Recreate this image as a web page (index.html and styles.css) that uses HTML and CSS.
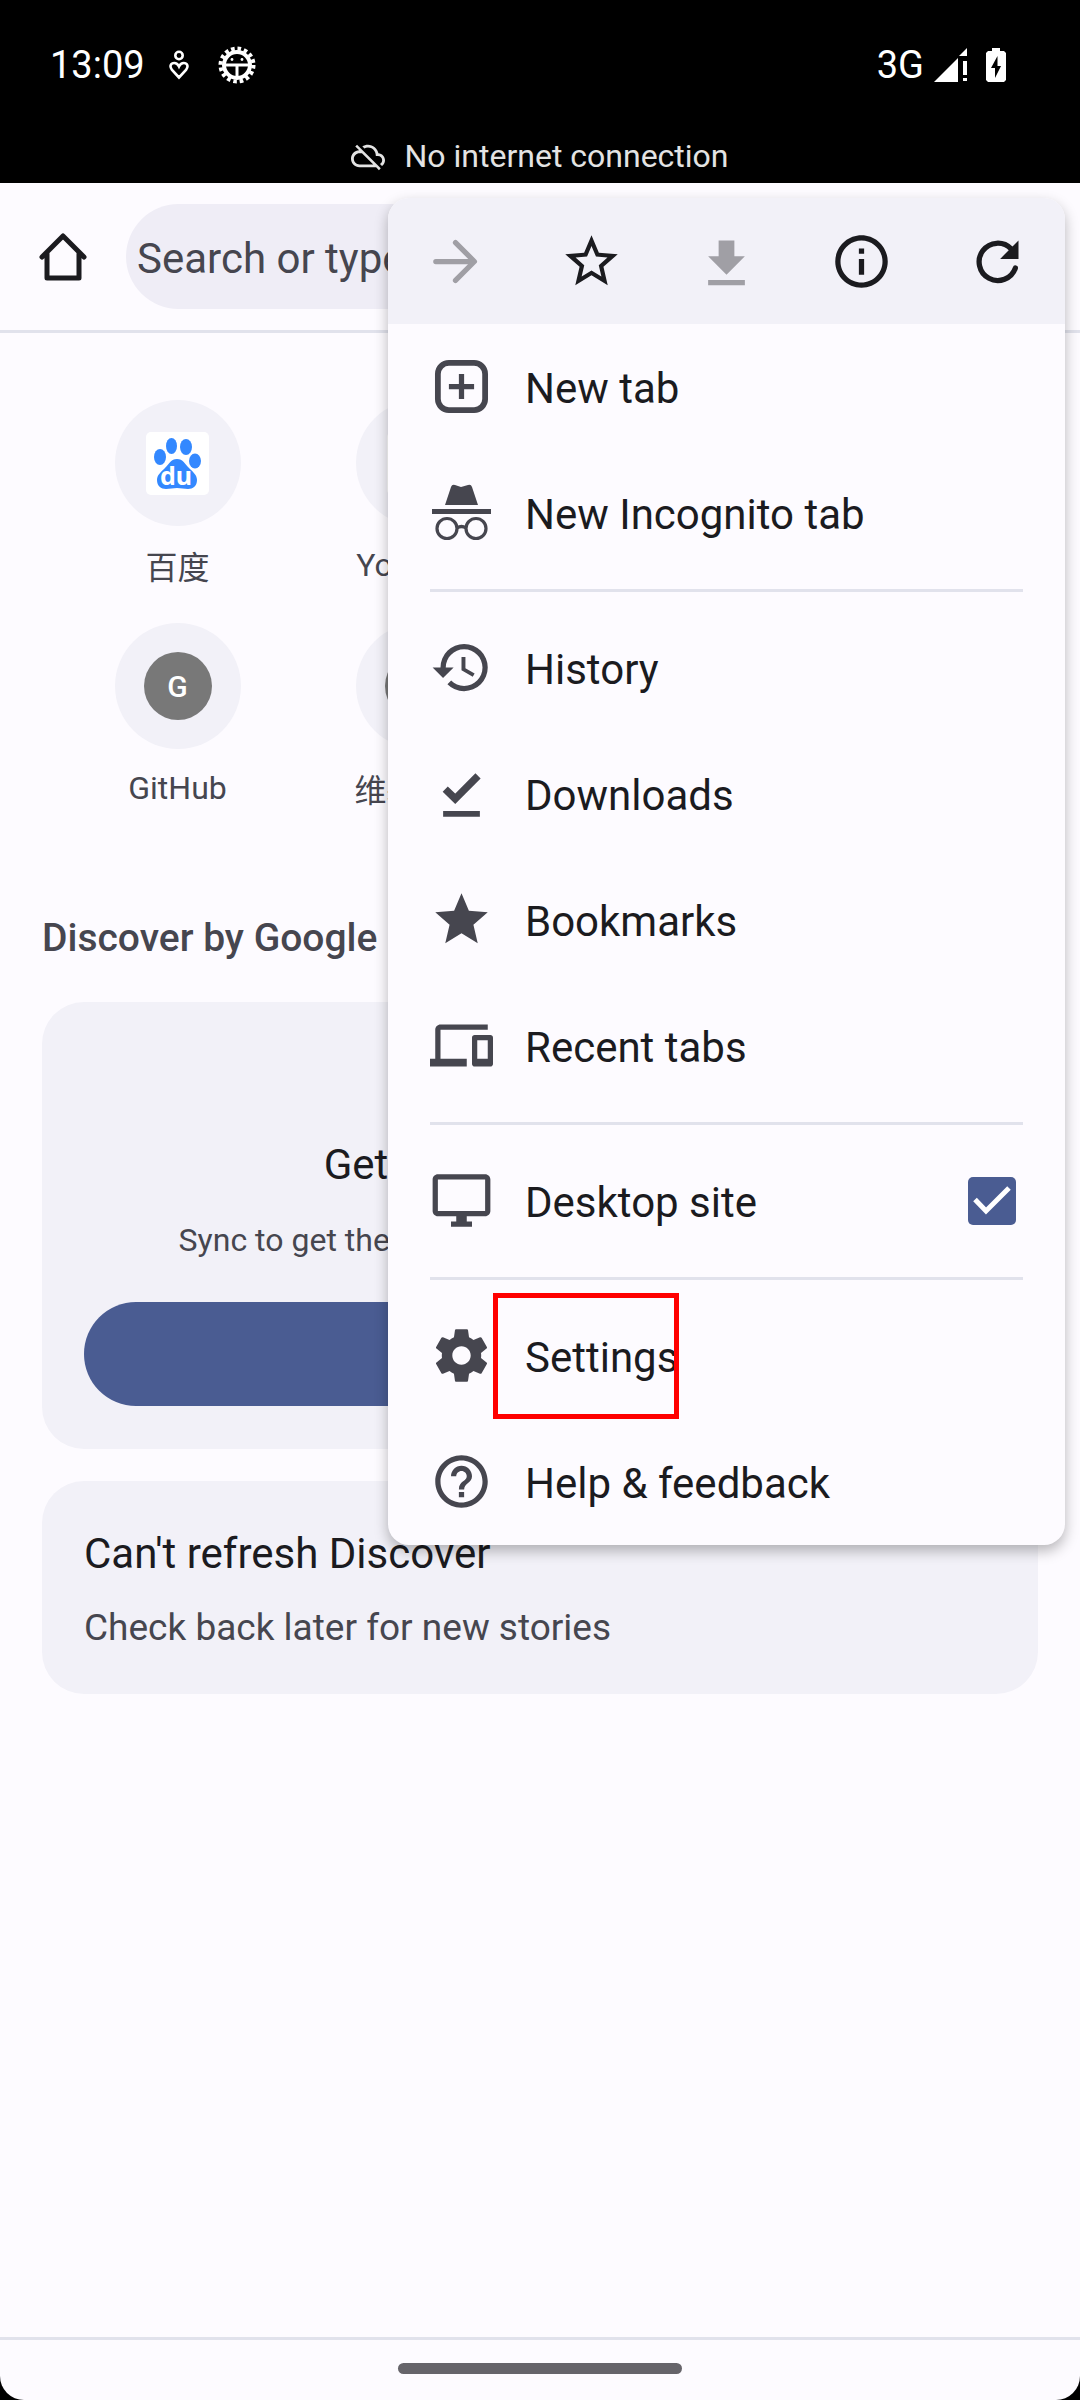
FILE: index.html
```html
<!DOCTYPE html>
<html lang="en">
<head>
<meta charset="utf-8">
<meta name="viewport" content="width=device-width, initial-scale=1">
<title>New tab</title>
<link rel="stylesheet" href="styles.css">
</head>
<body>
<div class="status">
  <div class="status-row">
    <span class="clock">13:09</span>
    <svg class="st-care" viewBox="0 0 20 30" fill="none" stroke="#fff" stroke-width="2.600"><circle cx="10" cy="5.500" r="3.700"/><path d="M10 27.500 3 20C0 16 2 13 5.300 13 7.500 13 9 14.500 10 16.500 11 14.500 12.500 13 14.700 13 18 13 20 16 17 20z"/></svg>
    <svg class="st-bug" viewBox="0 0 38 38"><circle cx="19" cy="19" r="13" fill="none" stroke="#fff" stroke-width="4"/><circle cx="19" cy="19" r="16.500" fill="none" stroke="#fff" stroke-width="4" stroke-dasharray="3.600 2.880"/><path d="M6 17.500h26v3H20.500V33h-3V20.500H6z" fill="#fff"/><circle cx="14" cy="13.500" r="1.400" fill="#fff"/><circle cx="24" cy="13.500" r="1.400" fill="#fff"/></svg>
    <span class="network">3G</span>
    <svg class="st-signal" viewBox="0 0 34 34" fill="#fff"><path d="M0 34 24 10v24zM25 8l8-8v8zM29 13h4v14h-4zM29 30h4v3h-4z"/></svg>
    <svg class="st-battery" viewBox="0 0 20 34"><path fill="#fff" d="M6 0h8v3h4l2 2v27l-2 2H2l-2-2V5l2-2h4z"/><path d="M11.500 8 5 20h4v10l6-12h-3.500z"/></svg>
  </div>
  <div class="offline">
    <svg viewBox="0 0 24 24" fill="#e3e3e3"><path d="M19.350 10.040C18.670 6.590 15.640 4 12 4c-1.480 0-2.850.43-4.010 1.170l1.460 1.460C10.210 6.230 11.080 6 12 6c3.040 0 5.500 2.460 5.500 5.500v.5H19c1.660 0 3 1.340 3 3 0 1.130-.64 2.110-1.560 2.620l1.450 1.450C23.160 18.160 24 16.680 24 15c0-2.640-2.050-4.780-4.650-4.960zM3 5.270l2.750 2.740C2.560 8.150 0 10.770 0 14c0 3.310 2.690 6 6 6h11.730l2 2L21 20.730 4.270 4 3 5.270zM7.730 10l8 8H6c-2.210 0-4-1.790-4-4s1.790-4 4-4h1.730z"/></svg>
    <span>No internet connection</span>
  </div>
</div>

<div class="browser">
  <header class="toolbar">
    <button class="home" aria-label="Home"><svg viewBox="0 0 48 48" fill="none" stroke="#1b1b1f" stroke-width="5" stroke-linecap="round" stroke-linejoin="round"><path d="M3 24 24 3l21 21M8 20v25h32V20"/></svg></button>
    <input class="search" type="text" aria-label="Search" placeholder="Search or type URL">
  </header>

  <main class="content">
    <nav class="tiles">
      <a class="tile" href="#"><span class="disc"><svg class="baidu" viewBox="0 0 63 63"><rect width="63" height="63" rx="5" fill="#fff"/><g fill="#3388ff"><ellipse cx="14" cy="25" rx="6" ry="8"/><ellipse cx="25.500" cy="14" rx="5.500" ry="8"/><ellipse cx="40" cy="15" rx="6" ry="8"/><ellipse cx="49" cy="29" rx="6" ry="7.500"/><path d="M31 27c6 0 8 5 12 9s8 7 8 12c0 6-4 9-9 9-4 0-7-1-11-1s-7 1-11 1c-5 0-9-3-9-9 0-5 4-8 8-12s6-9 12-9z"/></g><text x="30" y="53" text-anchor="middle" class="du">du</text></svg></span><span class="name zh" lang="zh">百度</span></a>
      <a class="tile" href="#"><span class="disc"><span class="favicon"></span></span><span class="name">YouTube</span></a>
      <span></span><span></span>
      <a class="tile" href="#"><span class="disc"><span class="mono">G</span></span><span class="name">GitHub</span></a>
      <a class="tile" href="#"><span class="disc"><span class="mono"></span></span><span class="name zh" lang="zh">维基百科</span></a>
    </nav>

    <h2 class="heading">Discover by Google</h2>

    <section class="card promo">
      <h3>Get articles just for you</h3>
      <p>Sync to get the most relevant content from Google.</p>
      <button class="cta">Continue</button>
    </section>

    <section class="card notice">
      <h3>Can't refresh Discover</h3>
      <p>Check back later for new stories</p>
    </section>
  </main>

  <footer class="gesture"><span class="handle"></span></footer>

  <div class="menu">
    <div class="menu-bar">
      <button aria-label="Forward" disabled><svg viewBox="0 0 24 24" fill="none" stroke="#a09fa5" stroke-width="2" stroke-linecap="round" stroke-linejoin="round"><path d="M4.500 12h14M12 4.800l7.200 7.200-7.200 7.200"/></svg></button>
      <button aria-label="Bookmark"><svg viewBox="0 0 24 24" fill="#1b1b1f"><path d="M22 9.240l-7.190-.62L12 2 9.190 8.630 2 9.240l5.460 4.730L5.820 21 12 17.270 18.180 21l-1.630-7.030L22 9.240zM12 15.400l-3.760 2.270 1-4.280-3.320-2.880 4.380-.38L12 6.100l1.710 4.040 4.380.38-3.320 2.880 1 4.280L12 15.400z"/></svg></button>
      <button aria-label="Download" disabled><svg viewBox="0 0 24 24" fill="#a09fa5"><path d="M19 10h-4V4H9v6H5l7 7zM5 19v2h14v-2z"/></svg></button>
      <button aria-label="Page info"><svg viewBox="0 0 24 24" fill="#1b1b1f"><path d="M11 7h2v2h-2zm0 4h2v6h-2zm1-9C6.480 2 2 6.480 2 12s4.480 10 10 10 10-4.480 10-10S17.520 2 12 2zm0 18c-4.410 0-8-3.590-8-8s3.590-8 8-8 8 3.590 8 8-3.590 8-8 8z"/></svg></button>
      <button aria-label="Refresh"><svg viewBox="0 0 24 24"><path d="M18.800 14.500A7.100 7.100 0 1 1 17.200 7.200" fill="none" stroke="#1b1b1f" stroke-width="2" stroke-linecap="round"/><path d="M20 4v7h-7z" fill="#1b1b1f"/></svg></button>
    </div>
    <ul class="items">
      <li><a class="item" href="#"><svg viewBox="0 0 24 24" fill="none" stroke="#46464f" stroke-width="2.200"><rect x="3" y="3" width="18" height="18" rx="4.200"/><path d="M12 7.200v9.600M7.200 12h9.600" stroke-width="2"/></svg><span class="label">New tab</span></a></li>
      <li><a class="item" href="#"><svg viewBox="0 0 63 63" fill="#46464f"><path d="M15 24 21 6q1-3 4-2l6 2 7-2q3-1 4 2l6 18zM2 28h59v5H2z"/><g fill="none" stroke="#46464f" stroke-width="3.200"><circle cx="17" cy="47.500" r="10"/><circle cx="46" cy="47.500" r="10"/><path d="M27 47q4.500-3 9 0"/></g></svg><span class="label">New Incognito tab</span></a></li>
      <li class="divider"></li>
      <li><a class="item" href="#"><svg viewBox="0 0 24 24" fill="#46464f"><path d="M13 3a9 9 0 0 0-9 9H1l3.890 3.890.07.14L9 12H6c0-3.870 3.130-7 7-7s7 3.130 7 7-3.130 7-7 7c-1.930 0-3.680-.79-4.940-2.060l-1.420 1.420A8.950 8.950 0 0 0 13 21a9 9 0 0 0 0-18zm-1 5v5l4.280 2.540.72-1.210-3.500-2.080V8H12z"/></svg><span class="label">History</span></a></li>
      <li><a class="item" href="#"><svg viewBox="0 0 24 24" fill="none" stroke="#46464f"><path d="M5.800 10.300 9.600 14l8.700-8.700" stroke-width="2.800"/><path d="M5 19.800h14" stroke-width="2.200"/></svg><span class="label">Downloads</span></a></li>
      <li><a class="item" href="#"><svg viewBox="0 0 24 24" fill="#46464f"><path d="M12 17.270 18.180 21l-1.640-7.030L22 9.240l-7.190-.61L12 2 9.190 8.630 2 9.240l5.460 4.730L5.820 21z"/></svg><span class="label">Bookmarks</span></a></li>
      <li><a class="item" href="#"><svg viewBox="0 0 24 24" fill="#46464f"><path d="M4 6h18V4H4c-1.100 0-2 .9-2 2v11H0v3h14v-3H4V6zm19 2h-6c-.55 0-1 .45-1 1v10c0 .55.45 1 1 1h6c.55 0 1-.45 1-1V9c0-.55-.45-1-1-1zm-1 9h-4v-7h4v7z"/></svg><span class="label">Recent tabs</span></a></li>
      <li class="divider"></li>
      <li><label class="item"><svg viewBox="0 0 24 24" fill="#46464f"><path d="M21 2H3c-1.100 0-2 .9-2 2v12c0 1.100.9 2 2 2h7v2H8v2h8v-2h-2v-2h7c1.100 0 2-.9 2-2V4c0-1.100-.9-2-2-2zm0 14H3V4h18v12z"/></svg><span class="label">Desktop site</span><span class="check"><input type="checkbox" checked><svg viewBox="0 0 48 48" fill="none" stroke="#fff" stroke-width="5"><path d="M7 22.500 18 34l23-23"/></svg></span></label></li>
      <li class="divider"></li>
      <li><a class="item" href="#"><svg viewBox="0 0 24 24" fill="#46464f"><path d="M19.430 12.980c.04-.32.07-.64.07-.98s-.03-.66-.07-.98l2.110-1.650c.19-.15.24-.42.12-.64l-2-3.460c-.12-.22-.39-.3-.61-.22l-2.490 1c-.52-.4-1.080-.73-1.690-.98l-.38-2.650C14.460 2.180 14.250 2 14 2h-4c-.25 0-.46.18-.49.42l-.38 2.650c-.61.25-1.170.59-1.690.98l-2.490-1c-.23-.09-.49 0-.61.22l-2 3.460c-.13.22-.07.49.12.64l2.110 1.650c-.04.32-.07.65-.07.98s.03.66.07.98l-2.110 1.650c-.19.15-.24.42-.12.64l2 3.460c.12.22.39.3.61.22l2.490-1c.52.4 1.080.73 1.690.98l.38 2.650c.03.24.24.42.49.42h4c.25 0 .46-.18.49-.42l.38-2.650c.61-.25 1.170-.59 1.690-.98l2.490 1c.23.09.49 0 .61-.22l2-3.460c.12-.22.07-.49-.12-.64l-2.110-1.650zM12 15.500c-1.930 0-3.500-1.570-3.500-3.500s1.570-3.500 3.500-3.500 3.500 1.570 3.500 3.500-1.570 3.500-3.500 3.500z"/></svg><span class="label marked">Settings</span></a></li>
      <li><a class="item" href="#"><svg viewBox="0 0 24 24" fill="#46464f"><path d="M11 16h2v2h-2v-2zm1-14C6.480 2 2 6.480 2 12s4.480 10 10 10 10-4.480 10-10S17.520 2 12 2zm0 18c-4.410 0-8-3.590-8-8s3.590-8 8-8 8 3.590 8 8-3.590 8-8 8zm0-14c-2.210 0-4 1.790-4 4h2c0-1.100.9-2 2-2s2 .9 2 2c0 2-3 1.750-3 5h2c0-2.250 3-2.500 3-5 0-2.210-1.790-4-4-4z"/></svg><span class="label">Help &amp; feedback</span></a></li>
    </ul>
  </div>
</div>
</body>
</html>
```

FILE: styles.css
```css
* {
  box-sizing: border-box;
}

html {
  background: #000;
}

body {
  margin: 0;
  min-height: 100vh;
  display: flex;
  flex-direction: column;
  font-family: Roboto, "Noto Sans CJK SC", sans-serif;
  color: #1b1b1f;
}

h2, h3, p, ul {
  margin: 0;
  padding: 0;
  font-weight: 400;
}

button {
  border: 0;
  padding: 0;
  background: none;
  font: inherit;
}

a {
  color: inherit;
  text-decoration: none;
}

svg {
  display: block;
  flex: none;
}

/* Status bar */
.status {
  height: 183px;
  background: #000;
  color: #fff;
}

.status-row {
  display: flex;
  align-items: center;
  height: 130px;
  padding: 0 74px 0 50px;
  font-size: 38px;
}

.st-care {
  width: 20px;
  height: 30px;
  margin-left: 24px;
}

.st-bug {
  width: 38px;
  height: 38px;
  margin-left: 29px;
}

.network {
  margin-left: auto;
}

.st-signal {
  width: 34px;
  height: 34px;
  margin-left: 10px;
}

.st-battery {
  width: 20px;
  height: 34px;
  margin-left: 18px;
}

.offline {
  display: flex;
  justify-content: center;
  align-items: center;
  gap: 19px;
  height: 52px;
  font-size: 32px;
  color: #e3e3e3;
}

.offline svg {
  width: 34px;
  height: 34px;
}

/* Browser page */
.browser {
  position: relative;
  flex: 1;
  display: flex;
  flex-direction: column;
  background: #fdfbff;
  border-radius: 0 0 24px 24px;
}

.toolbar {
  display: flex;
  align-items: center;
  height: 150px;
  padding: 0 42px 0 0;
  border-bottom: 3px solid #e1e2ec;
}

.home {
  display: flex;
  justify-content: center;
  width: 126px;
}

.home svg {
  width: 48px;
  height: 48px;
}

.search {
  flex: 1;
  min-width: 0;
  height: 105px;
  border: 0;
  border-radius: 53px;
  padding: 3px 11px 0;
  background: #efedf6;
  font: inherit;
  font-size: 42px;
  color: #46464f;
}

.search::placeholder {
  color: #46464f;
  opacity: 1;
}

.content {
  flex: 1;
  padding: 67px 42px 42px;
}

.tiles {
  display: grid;
  grid-template-columns: repeat(4, 1fr);
  row-gap: 37px;
  padding: 0 17px 0 15px;
}

.tile {
  display: flex;
  flex-direction: column;
  align-items: center;
  gap: 20px;
}

.disc {
  display: flex;
  align-items: center;
  justify-content: center;
  width: 126px;
  height: 126px;
  border-radius: 50%;
  background: #f2f1f8;
}

.baidu {
  width: 63px;
  height: 63px;
}

.du {
  font: 700 25px "Noto Sans", sans-serif;
  fill: #fff;
}

.favicon {
  width: 63px;
  height: 63px;
  border-radius: 5px;
  background: #fff;
}

.mono {
  display: flex;
  align-items: center;
  justify-content: center;
  width: 68px;
  height: 68px;
  border-radius: 50%;
  background: #787878;
  color: #fff;
  font-size: 30px;
  font-weight: 500;
}

.name {
  height: 40px;
  line-height: 38px;
  font-size: 32px;
  color: #46464f;
}

.zh {
  line-height: 44px;
}

.heading {
  margin-top: 103px;
  line-height: 52px;
  font-size: 39px;
  font-weight: 500;
  color: #46464f;
}

.card {
  padding: 43px 42px 40px;
  border-radius: 42px;
  background: #f2f1f8;
}

.card h3 {
  font-size: 42px;
  line-height: 60px;
}

.card p {
  color: #46464f;
}

.promo {
  margin-top: 38px;
  padding-top: 133px;
  padding-bottom: 43px;
  text-align: center;
}

.promo p {
  margin-top: 21px;
  font-size: 32px;
  line-height: 48px;
}

.cta {
  display: block;
  width: 100%;
  height: 104px;
  margin-top: 38px;
  border-radius: 52px;
  background: #4a5c92;
  color: #fff;
  font-size: 37px;
}

.notice {
  margin-top: 32px;
}

.notice p {
  margin-top: 18px;
  font-size: 37px;
  line-height: 52px;
}

.gesture {
  display: flex;
  justify-content: center;
  height: 63px;
  padding-top: 23px;
  border-top: 3px solid #e1e2ec;
}

.handle {
  width: 284px;
  height: 11px;
  border-radius: 6px;
  background: #66646a;
}

/* Overflow menu */
.menu {
  position: absolute;
  top: 15px;
  right: 15px;
  width: 677px;
  border-radius: 21px;
  background: #fdfbff;
  box-shadow: 0 6px 14px rgba(0, 0, 0, 0.28);
}

.menu-bar {
  display: grid;
  grid-template-columns: repeat(5, 1fr);
  height: 126px;
  border-radius: 21px 21px 0 0;
  background: #f2f1f8;
}

.menu-bar button {
  display: flex;
  align-items: center;
  justify-content: center;
}

.menu-bar svg,
.item > svg {
  width: 63px;
  height: 63px;
}

.item > svg {
  margin-bottom: 2px;
}

.items {
  list-style: none;
}

.item {
  display: flex;
  align-items: center;
  height: 126px;
  padding: 0 42px;
  font-size: 42px;
}

.label {
  height: 126px;
  padding-left: 32px;
  line-height: 130px;
}

.marked {
  position: relative;
}

.marked::after {
  content: "";
  position: absolute;
  inset: 0 -1px 0 0;
  border: 5px solid #f00;
}

.divider {
  height: 3px;
  margin: 13px 42px;
  background: #e1e2ec;
}

.check {
  position: relative;
  width: 48px;
  height: 48px;
  margin: 0 7px 0 auto;
}

.check input {
  appearance: none;
  display: block;
  width: 48px;
  height: 48px;
  margin: 0;
  border-radius: 5px;
  background: #4a5c92;
}

.check svg {
  position: absolute;
  inset: 0;
}
```
